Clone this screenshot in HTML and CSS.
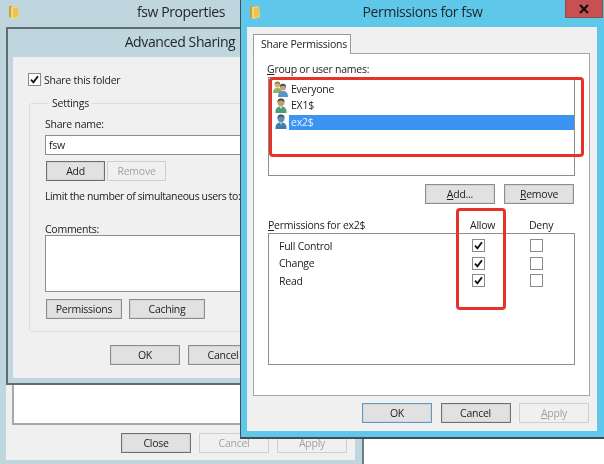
FILE: index.html
```html
<!DOCTYPE html>
<html lang="en">
<head>
    <meta charset="UTF-8">
    <title>Permissions for fsw</title>
    <link rel="stylesheet" href="styles.css">
</head>
<body>
    <svg class="defs" width="0" height="0">
        <symbol id="folder" viewBox="0 0 12 15">
            <path d="M1 1h3l1 1v11l-4-1z" fill="#c9a43c"/>
            <path d="M3 2l7-1 1 11-6 2-2-1z" fill="#f3d878"/>
            <path d="M5 3l5-1 .6 9-5.6 2z" fill="#e9c455"/>
        </symbol>
        <symbol id="tick" viewBox="0 0 12 12">
            <path d="M2.2 6.2l2.6 2.8 5-6.6" fill="none" stroke="#111" stroke-width="2"/>
        </symbol>
        <symbol id="user-green" viewBox="0 0 16 17">
            <path d="M2 16c0-5 2-7 6-7s6 2 6 7z" fill="#4f9a78"/>
            <path d="M6.5 9l1.5 3 1.500-3z" fill="#d9e6dc"/>
            <circle cx="8" cy="5" r="3.600" fill="#c99a72"/>
            <path d="M4.300 5c-.5-3 1.500-4.500 3.700-4.500s4.200 1.500 3.700 4.500c-1-2-2-2.300-3.700-2.300s-2.700.3-3.700 2.300z" fill="#3e4a3a"/>
        </symbol>
        <symbol id="user-blue" viewBox="0 0 16 17">
            <path d="M2 16c0-5 2-7 6-7s6 2 6 7z" fill="#3f7fb0"/>
            <path d="M6.500 9l1.500 3 1.500-3z" fill="#9fc6df"/>
            <circle cx="8" cy="5" r="3.600" fill="#5f8fae"/>
            <path d="M4.300 5c-.5-3 1.500-4.500 3.700-4.500s4.200 1.500 3.700 4.500c-1-2-2-2.300-3.700-2.300s-2.700.3-3.700 2.300z" fill="#2f5874"/>
        </symbol>
        <symbol id="user-group" viewBox="0 0 16 16">
            <path d="M0 12c0-3.500 1.500-5 4.500-5S9 8.500 9 12z" fill="#8fb35a"/>
            <circle cx="4.500" cy="4" r="2.800" fill="#d8b070"/>
            <path d="M1.700 4c-.3-2.500 1-3.500 2.800-3.500S7.600 1.500 7.300 4c-.8-1.300-1.500-1.600-2.800-1.600S2.500 2.700 1.700 4z" fill="#9a7a35"/>
            <path d="M5 16c0-4 1.500-6 5-6s5 2 5 6z" fill="#5f93c4"/>
            <circle cx="10" cy="6.500" r="3" fill="#c9a184"/>
            <path d="M7 6.500c-.3-2.700 1-3.800 3-3.800s3.300 1.100 3 3.800c-.8-1.400-1.600-1.700-3-1.700s-2.200.3-3 1.700z" fill="#3b4650"/>
        </symbol>
    </svg>

    <div class="desktop">
        <!-- fsw Properties, mostly covered -->
        <div class="window props">
            <div class="titlebar">
                <svg class="folder"><use href="#folder"/></svg>
                <span class="title">fsw Properties</span>
            </div>
            <div class="client props-client">
                <div class="props-box"></div>
                <div class="btn-row end">
                    <button class="btn strong">Close</button>
                    <button class="btn off">Cancel</button>
                    <button class="btn off">Apply</button>
                </div>
            </div>
        </div>

        <!-- Advanced Sharing -->
        <div class="window advanced">
            <div class="titlebar tall">
                <span></span>
                <span class="title">Advanced Sharing</span>
            </div>
            <div class="client advanced-client">
                <label class="share-check">
                    <span class="check"><svg><use href="#tick"/></svg></span>
                    Share this folder
                </label>
                <fieldset class="settings">
                    <legend>Settings</legend>
                    <div class="field-label">Share name:</div>
                    <div class="text-box">fsw</div>
                    <div class="btn-row small-gap">
                        <button class="btn short strong">Add</button>
                        <button class="btn short off">Remove</button>
                    </div>
                    <div class="limit-label">Limit the number of simultaneous users to:</div>
                    <div class="comments-label">Comments:</div>
                    <div class="comments-box"></div>
                    <div class="btn-row perm-btns">
                        <button class="btn mid">Permissions</button>
                        <button class="btn mid">Caching</button>
                    </div>
                </fieldset>
                <div class="btn-row ok-row">
                    <button class="btn">OK</button>
                    <button class="btn">Cancel</button>
                </div>
            </div>
        </div>

        <!-- Permissions for fsw -->
        <div class="window perms">
            <div class="titlebar">
                <svg class="folder"><use href="#folder"/></svg>
                <span class="title">Permissions for fsw</span>
                <div class="close-btn">
                    <svg viewBox="0 0 10 10"><path d="M1 1l8 8M9 1l-8 8" stroke="#111" stroke-width="2.200"/></svg>
                </div>
            </div>
            <div class="client perms-client">
                <div class="tab">Share Permissions</div>
                <div class="tab-page">
                    <div class="group-label"><u>G</u>roup or user names:</div>
                    <ul class="user-list">
                        <li><svg class="user-icon"><use href="#user-group"/></svg><span class="user-name">Everyone</span></li>
                        <li><svg class="user-icon"><use href="#user-green"/></svg><span class="user-name">EX1$</span></li>
                        <li><svg class="user-icon"><use href="#user-blue"/></svg><span class="user-name selected">ex2$</span></li>
                    </ul>
                    <div class="btn-row end list-btns">
                        <button class="btn"><u>A</u>dd...</button>
                        <button class="btn"><u>R</u>emove</button>
                    </div>
                    <div class="perm-grid perm-head">
                        <span><u>P</u>ermissions for ex2$</span>
                        <span>Allow</span>
                        <span>Deny</span>
                    </div>
                    <div class="perm-box">
                        <div class="perm-grid perm-row">
                            <span class="perm-name">Full Control</span>
                            <span class="check"><svg><use href="#tick"/></svg></span>
                            <span class="check"></span>
                        </div>
                        <div class="perm-grid perm-row">
                            <span class="perm-name">Change</span>
                            <span class="check"><svg><use href="#tick"/></svg></span>
                            <span class="check"></span>
                        </div>
                        <div class="perm-grid perm-row">
                            <span class="perm-name">Read</span>
                            <span class="check"><svg><use href="#tick"/></svg></span>
                            <span class="check"></span>
                        </div>
                    </div>
                </div>
                <div class="btn-row end dialog-btns">
                    <button class="btn default">OK</button>
                    <button class="btn strong">Cancel</button>
                    <button class="btn off"><u>A</u>pply</button>
                </div>
            </div>
        </div>

        <!-- red annotation boxes drawn on the screenshot -->
        <div class="mark mark-users"></div>
        <div class="mark mark-allow"></div>
    </div>
</body>
</html>
```

FILE: styles.css
```css
body {
    margin: 0;
    background-color: #ffffff;
    font-family: "Open Sans", sans-serif;
    font-size: 10.5px;
    letter-spacing: -0.25px;
    color: #222222;
}

.defs {
    position: absolute;
}

.desktop {
    position: relative;
    width: 604px;
    height: 464px;
    overflow: hidden;
    filter: blur(0.35px);
}

/* windows sit on a free canvas */
.window {
    position: absolute;
    box-sizing: border-box;
}

.props {
    left: 0;
    top: 0;
    width: 364px;
    height: 464px;
    background-color: #bfd6de;
    border-right: 2px solid #6f7c82;
    padding: 0 7px 4px 6px;
    display: flex;
    flex-direction: column;
}

.advanced {
    left: 6px;
    top: 27px;
    width: 356px;
    height: 358px;
    background-color: #bfd6de;
    border: 2px solid #5f6c72;
    padding: 0 5px 5px 5px;
    display: flex;
    flex-direction: column;
}

.perms {
    left: 240px;
    top: 0;
    width: 370px;
    height: 439px;
    background-color: #5fc8ea;
    border-left: 1px solid #3f4f57;
    border-bottom: 2px solid #3f4f57;
    padding: 0 13px 6px 6px;
    display: flex;
    flex-direction: column;
}

.titlebar {
    box-sizing: border-box;
    display: grid;
    grid-template-columns: 1fr auto 1fr;
    align-items: center;
    height: 27px;
    padding-bottom: 3px;
    flex: none;
    font-size: 14px;
    letter-spacing: -0.4px;
}

.titlebar.tall {
    height: 28px;
    padding-right: 8px;
}

.props .titlebar {
    margin: 0 -7px 0 -6px;
}

.perms .titlebar {
    margin: 0 -7px 0 -6px;
}

.title {
    color: #20282c;
    line-height: 20px;
}

.folder {
    width: 12px;
    height: 15px;
    margin-left: 8px;
}

.close-btn {
    justify-self: end;
    align-self: start;
    box-sizing: border-box;
    width: 38px;
    height: 18px;
    margin-right: 1px;
    background-color: #c75050;
    border: 1px solid #8f4a46;
    border-top: none;
    display: flex;
    align-items: center;
    justify-content: center;
}

.close-btn svg {
    width: 10px;
    height: 10px;
}

.client {
    flex: 1;
    background-color: #f0f0f0;
    display: flex;
    flex-direction: column;
    min-height: 0;
}

/* buttons */
.btn-row {
    display: flex;
    gap: 8px;
}

.btn-row.end {
    justify-content: flex-end;
}

.btn {
    box-sizing: border-box;
    width: 70px;
    height: 20px;
    padding: 0;
    font: inherit;
    letter-spacing: inherit;
    color: #222222;
    background-color: #e1e1e1;
    border: 1px solid #8e8e8e;
    box-shadow: inset 0 0 0 1px #d4d4d4;
}

.btn.strong {
    border-color: #6f6f6f;
}

.btn.default {
    border-color: #5b9ccd;
}

.btn.off {
    color: #a2a2a2;
    background-color: #f0f0f0;
    border-color: #cfcfcf;
    box-shadow: none;
}

.btn.short {
    width: 59px;
}

.btn.mid {
    width: 76px;
}

/* fsw Properties */
.props-client {
    justify-content: flex-end;
    padding: 0 8px 7px 6px;
}

.props-box {
    height: 40px;
    box-sizing: border-box;
    background-color: #ffffff;
    border: 2px solid #a8a8ac;
    border-top: none;
}

.props-client .btn-row {
    margin-top: 8px;
}

/* Advanced Sharing */
.advanced-client {
    padding: 16px 0 0 15px;
}

.share-check {
    display: flex;
    align-items: center;
    gap: 3px;
    height: 13px;
}

.check {
    box-sizing: border-box;
    display: block;
    width: 13px;
    height: 13px;
    background-color: #ffffff;
    border: 1px solid #8a8a8a;
}

.check svg {
    display: block;
    width: 11px;
    height: 11px;
}

.settings {
    margin: 10px 0 0 1px;
    padding: 6px 0 0 15px;
    height: 236px;
    box-sizing: border-box;
    border: 1px solid #dcdcdc;
    border-radius: 3px;
}

.settings legend {
    margin-left: 4px;
    padding: 0 3px;
    line-height: 15px;
}

.field-label {
    line-height: 15px;
}

.text-box {
    box-sizing: border-box;
    height: 20px;
    margin-top: 3px;
    padding-left: 3px;
    line-height: 18px;
    background-color: #ffffff;
    border: 1px solid #8e8e8e;
}

.small-gap {
    gap: 2px;
    margin: 6px 0 0 1px;
}

.limit-label {
    margin-top: 8px;
    line-height: 15px;
    letter-spacing: -0.38px;
}

.comments-label {
    margin-top: 18px;
    line-height: 15px;
}

.comments-box {
    box-sizing: border-box;
    height: 57px;
    margin-top: -2px;
    background-color: #ffffff;
    border: 1px solid #8e8e8e;
}

.perm-btns {
    gap: 7px;
    margin: 7px 0 0 1px;
}

.ok-row {
    margin: 13px 0 0 82px;
}

/* Permissions for fsw */
.perms-client {
    padding: 7px 7px 7px 6px;
}

.tab {
    box-sizing: border-box;
    width: 98px;
    height: 20px;
    margin-bottom: -1px;
    padding-left: 7px;
    line-height: 19px;
    white-space: nowrap;
    background-color: #ffffff;
    border: 1px solid #9a9a9a;
    border-bottom: none;
    position: relative;
    z-index: 1;
}

.tab-page {
    box-sizing: border-box;
    height: 343px;
    padding: 8px 14px 0 14px;
    background-color: #ffffff;
    border: 1px solid #a6a6a6;
}

.group-label {
    margin-left: -1px;
    line-height: 15px;
}

.user-list {
    box-sizing: border-box;
    height: 99px;
    margin: 0;
    padding: 3px 0 0 4px;
    list-style: none;
    border: 1px solid #8e8e8e;
}

.user-list li {
    display: flex;
    align-items: center;
    height: 16.5px;
}

.user-icon {
    flex: none;
    width: 16px;
    height: 16px;
}

.user-name {
    flex: 1;
    padding-left: 2px;
    line-height: 15px;
}

.user-name.selected {
    color: #e8f2ff;
    background-color: #3b94f2;
}

.list-btns {
    gap: 9px;
    margin: 8px 1px 0 0;
}

.perm-grid {
    display: grid;
    grid-template-columns: 202px 59px 1fr;
    align-items: center;
}

.perm-head {
    margin-top: 14px;
    line-height: 15px;
}

.perm-box {
    box-sizing: border-box;
    height: 132px;
    padding: 3px 0 0 0;
    border: 1px solid #8e8e8e;
}

.perm-row {
    height: 17.5px;
    grid-template-columns: 203px 58px 1fr;
}

.perm-name {
    padding-left: 10px;
}

.dialog-btns {
    gap: 8.5px;
    margin-top: 7px;
    padding-right: 1px;
}

/* red boxes */
.mark {
    position: absolute;
    box-sizing: border-box;
    border: 3px solid #e5322b;
    border-radius: 4px;
}

.mark-users {
    left: 269px;
    top: 77px;
    width: 315px;
    height: 80px;
}

.mark-allow {
    left: 456px;
    top: 208px;
    width: 50px;
    height: 102px;
}
```
